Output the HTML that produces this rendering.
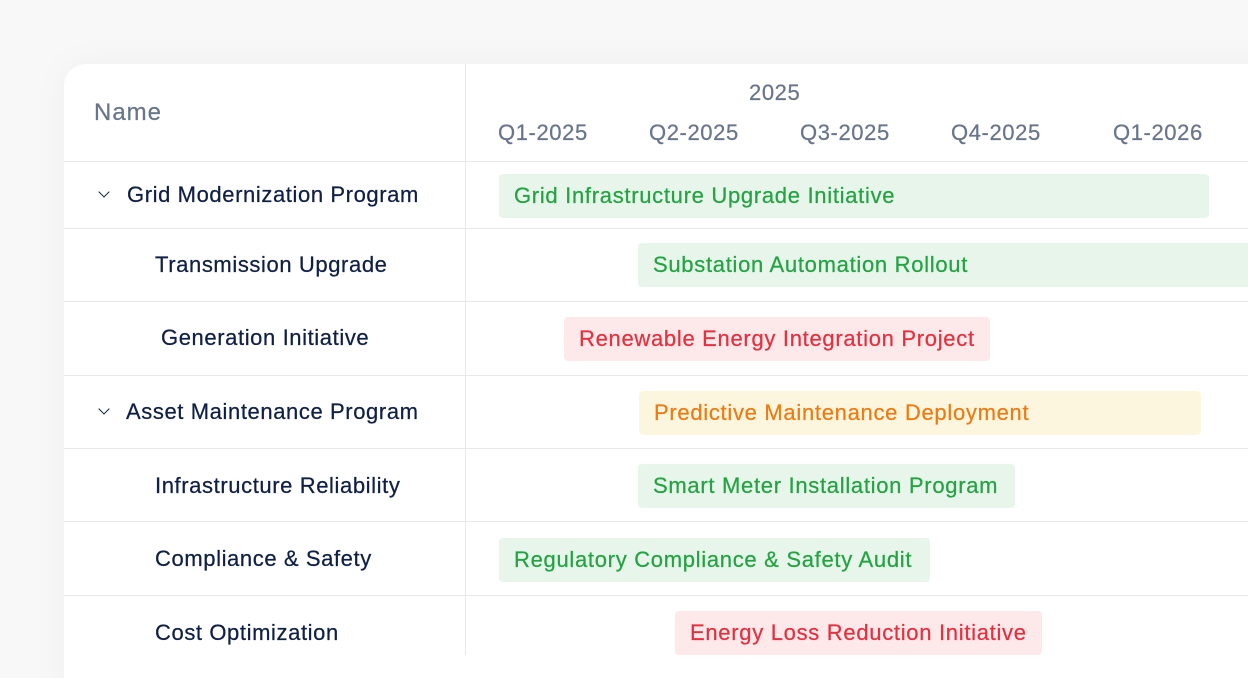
<!DOCTYPE html>
<html style="width:1248px;height:678px;overflow:hidden"><head><style>
*{margin:0;padding:0;box-sizing:border-box}
body{width:1248px;height:678px;overflow:hidden;background:#f8f8f9;font-family:"Liberation Sans",sans-serif;position:relative}
.card{position:absolute;left:64px;top:64px;width:1220px;height:640px;background:#fff;border-radius:22px;box-shadow:0 0 40px rgba(0,0,0,0.04)}
.vd{position:absolute;left:465px;top:64px;width:1px;height:591px;background:#e6e8ec}
.hl{position:absolute;left:64px;width:1184px;height:1px;background:#e6e8ec}
.t{position:absolute;white-space:nowrap;font-size:22px;letter-spacing:0.6px;-webkit-text-stroke:0.25px currentColor}
.h{color:#68758c}
.n{color:#0f1f45}
.bar{position:absolute;height:44px;border-radius:4px;font-size:22px;letter-spacing:0.7px;line-height:44px;padding-left:15px;white-space:nowrap;-webkit-text-stroke:0.25px currentColor}
.g{background:#e8f5ea;color:#22a443}
.r{background:#fde8ea;color:#e5303f}
.y{background:#fdf6df;color:#ee7b12}
.chev{position:absolute;width:8px;height:8px;border-right:1.8px solid #0f1f45;border-bottom:1.8px solid #0f1f45;transform:rotate(45deg)}
</style></head><body>
<div class="card"></div>
<div class="vd"></div>
<div class="hl" style="top:161px"></div>
<div class="hl" style="top:228px"></div>
<div class="hl" style="top:301px"></div>
<div class="hl" style="top:375px"></div>
<div class="hl" style="top:448px"></div>
<div class="hl" style="top:521px"></div>
<div class="hl" style="top:595px"></div>
<div class="t h" style="left:94px;top:99px;font-size:24px;letter-spacing:1px">Name</div>
<div class="t h" style="left:749px;top:80px">2025</div>
<div class="t h" style="left:498px;top:120px">Q1-2025</div>
<div class="t h" style="left:649px;top:120px">Q2-2025</div>
<div class="t h" style="left:800px;top:120px">Q3-2025</div>
<div class="t h" style="left:951px;top:120px">Q4-2025</div>
<div class="t h" style="left:1113px;top:120px">Q1-2026</div>
<div class="chev" style="left:100px;top:188px"></div>
<div class="t n" style="left:127px;top:182px">Grid Modernization Program</div>
<div class="t n" style="left:155px;top:252px">Transmission Upgrade</div>
<div class="t n" style="left:161px;top:325px">Generation Initiative</div>
<div class="chev" style="left:100px;top:405px"></div>
<div class="t n" style="left:126px;top:399px">Asset Maintenance Program</div>
<div class="t n" style="left:155px;top:473px">Infrastructure Reliability</div>
<div class="t n" style="left:155px;top:546px">Compliance &amp; Safety</div>
<div class="t n" style="left:155px;top:620px">Cost Optimization</div>
<div class="bar g" style="left:499px;top:174px;width:710px">Grid Infrastructure Upgrade Initiative</div>
<div class="bar g" style="left:638px;top:243px;width:620px">Substation Automation Rollout</div>
<div class="bar r" style="left:564px;top:317px;width:426px">Renewable Energy Integration Project</div>
<div class="bar y" style="left:639px;top:391px;width:562px">Predictive Maintenance Deployment</div>
<div class="bar g" style="left:638px;top:464px;width:377px">Smart Meter Installation Program</div>
<div class="bar g" style="left:499px;top:538px;width:431px">Regulatory Compliance &amp; Safety Audit</div>
<div class="bar r" style="left:675px;top:611px;width:367px">Energy Loss Reduction Initiative</div>
</body></html>
